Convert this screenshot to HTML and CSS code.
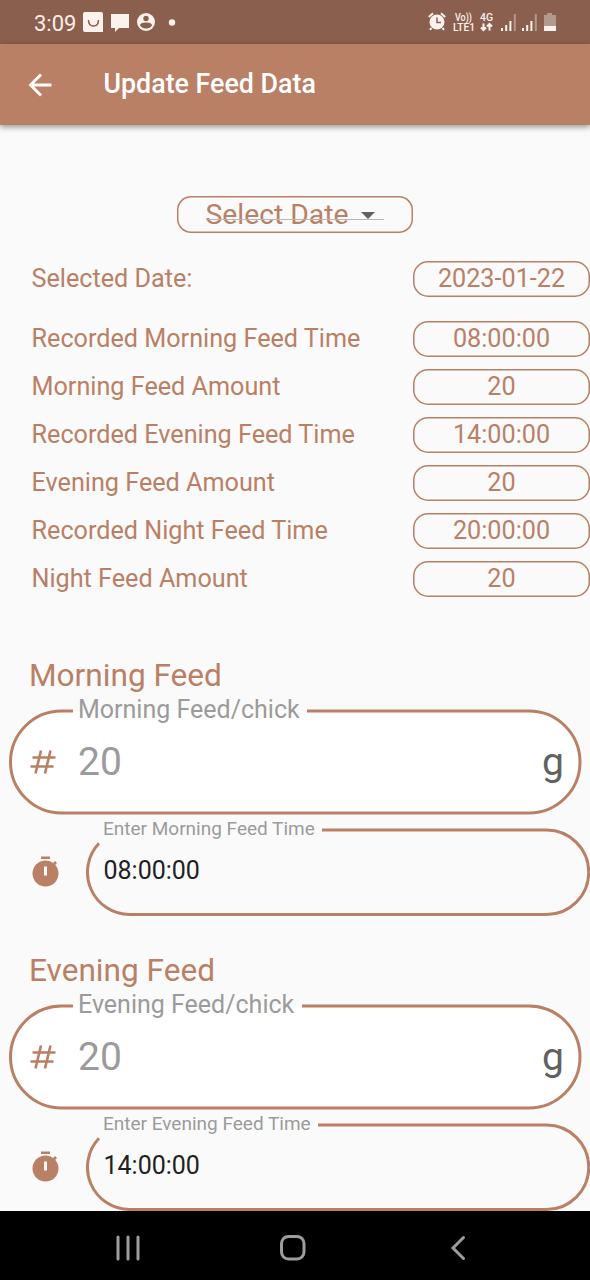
FILE: index.html
```html
<!DOCTYPE html>
<html lang="en">
<head>
<meta charset="utf-8">
<title>Update Feed Data</title>
<link rel="stylesheet" href="styles.css">
</head>
<body>
<div class="screen">
  <div class="status">
    <span class="clock">3:09</span>
    <svg class="status-left" width="98" height="24" viewBox="0 0 98 24">
      <path class="light" d="M2 1H18Q20 1 20 3V21H2Q0 21 0 19V3Q0 1 2 1Z"/>
      <path class="smile" d="M5.500 9Q5.500 15 10.500 15T15.500 9"/>
      <path class="light" d="M28 3H46V17H36L32 21V17H28Z"/>
      <circle class="light" cx="63" cy="11" r="9"/>
      <circle class="cut" cx="63" cy="7.500" r="2.700"/>
      <path class="cut" d="M57 14.500Q57 11.500 63 11.500T69 14.500Q67 17.500 63 17.500T57 14.500Z"/>
      <circle class="light" cx="89" cy="11.500" r="3.200"/>
    </svg>
    <svg class="status-right" width="130" height="24" viewBox="0 0 130 24">
      <circle class="light" cx="9" cy="11" r="7.500"/>
      <path class="bell" d="M0.800 6L5 2.200M13 2.200L17.200 6M3.500 17L2 18.800M14.500 17L16 18.800"/>
      <path class="hand" d="M9 6.500V11.500H13"/>
      <text class="net" x="27" y="9.500" textLength="17" lengthAdjust="spacingAndGlyphs">Vo))</text>
      <text class="net" x="25" y="20" textLength="22" lengthAdjust="spacingAndGlyphs">LTE1</text>
      <text class="net" x="52" y="9.500" textLength="13" lengthAdjust="spacingAndGlyphs">4G</text>
      <path class="arrows" d="M55.500 12.500V19M53 16.500L55.500 19L58 16.500M61.500 19.500V13M59 15.500L61.500 13L64 15.500"/>
      <path class="light" d="M73 17h2v3h-2zM77.200 14h2v6h-2zM81.400 10h2v10h-2zM94 17h2v3h-2zM98.200 14h2v6h-2zM102.400 10h2v10h-2z"/>
      <path class="dim" d="M85.800 3h2v17h-2zM106.800 3h2v17h-2zM119 2h5v2h4v11h-12V4h3z"/>
      <path class="light" d="M116 15H128V20H116Z"/>
    </svg>
  </div>
  <header class="appbar">
    <svg class="back" width="24" height="24" viewBox="0 0 24 24"><path d="M23.500 12H2.500M13 1.500L2.500 12L13 22.500"/></svg>
    <h1 class="title">Update Feed Data</h1>
  </header>
  <main class="content">
    <div class="picker"><span class="picker-text">Select Date</span><span class="caret"></span><span class="underline"></span></div>
    <div class="row first"><span>Selected Date:</span><span class="pill">2023-01-22</span></div>
    <div class="row"><span>Recorded Morning Feed Time</span><span class="pill">08:00:00</span></div>
    <div class="row"><span>Morning Feed Amount</span><span class="pill">20</span></div>
    <div class="row"><span>Recorded Evening Feed Time</span><span class="pill">14:00:00</span></div>
    <div class="row"><span>Evening Feed Amount</span><span class="pill">20</span></div>
    <div class="row"><span>Recorded Night Feed Time</span><span class="pill">20:00:00</span></div>
    <div class="row"><span>Night Feed Amount</span><span class="pill">20</span></div>

    <section class="feed">
      <h2 class="heading">Morning Feed</h2>
      <div class="amount">
        <svg class="outline" width="590" height="106" viewBox="0 0 590 106">
          <path class="fill" d="M61.500 2H529A51 51 0 0 1 529 104H61.500A51 51 0 0 1 61.500 2Z"/>
          <path class="line" d="M307 2H529A51 51 0 0 1 529 104H61.500A51 51 0 0 1 61.500 2H73"/>
        </svg>
        <span class="amount-label">Morning Feed/chick</span>
        <svg class="hash" width="26" height="24" viewBox="0 0 26 24"><path d="M2.500 7.500H25.500M.5 16.500H23.500M11 .5L5.500 23.500M20.500 .5L15 23.500"/></svg>
        <span class="amount-value">20</span><span class="unit">g</span>
      </div>
      <div class="time">
        <svg class="outline" width="590" height="90" viewBox="0 0 590 90">
          <path class="line" d="M322 3H546.500A42.200 42.200 0 0 1 546.500 87.500H129.700A42.200 42.200 0 0 1 99 16.300"/>
        </svg>
        <span class="time-label">Enter Morning Feed Time</span>
        <svg class="watch" width="28" height="32" viewBox="0 0 28 32"><path class="brown" d="M9 .5h9V3H9zM21 7l2-2 2 2-2 2z"/><circle class="brown" cx="13.500" cy="17.500" r="13"/><path class="bg" d="M12 10.500h3v9h-3z"/></svg>
        <span class="time-value">08:00:00</span>
      </div>
    </section>

    <section class="feed second">
      <h2 class="heading">Evening Feed</h2>
      <div class="amount">
        <svg class="outline" width="590" height="106" viewBox="0 0 590 106">
          <path class="fill" d="M61.500 2H529A51 51 0 0 1 529 104H61.500A51 51 0 0 1 61.500 2Z"/>
          <path class="line" d="M302 2H529A51 51 0 0 1 529 104H61.500A51 51 0 0 1 61.500 2H73"/>
        </svg>
        <span class="amount-label">Evening Feed/chick</span>
        <svg class="hash" width="26" height="24" viewBox="0 0 26 24"><path d="M2.500 7.500H25.500M.5 16.500H23.500M11 .5L5.500 23.500M20.500 .5L15 23.500"/></svg>
        <span class="amount-value">20</span><span class="unit">g</span>
      </div>
      <div class="time">
        <svg class="outline" width="590" height="90" viewBox="0 0 590 90">
          <path class="line" d="M318 3H546.500A42.200 42.200 0 0 1 546.500 87.500H129.700A42.200 42.200 0 0 1 99 16.300"/>
        </svg>
        <span class="time-label">Enter Evening Feed Time</span>
        <svg class="watch" width="28" height="32" viewBox="0 0 28 32"><path class="brown" d="M9 .5h9V3H9zM21 7l2-2 2 2-2 2z"/><circle class="brown" cx="13.500" cy="17.500" r="13"/><path class="bg" d="M12 10.500h3v9h-3z"/></svg>
        <span class="time-value">14:00:00</span>
      </div>
    </section>
  </main>
  <nav class="navbar">
    <svg width="24" height="26" viewBox="0 0 24 26"><path d="M2 2V24M12 2V24M22 2V24"/></svg>
    <svg class="home" width="26" height="26" viewBox="0 0 26 26"><rect x="1.500" y="1.500" width="22.500" height="22.500" rx="7"/></svg>
    <svg width="16" height="26" viewBox="0 0 16 26"><path d="M13.500 2.500L3 13L13.500 23.500"/></svg>
  </nav>
</div>
</body>
</html>
```
FILE: styles.css
```css
* { box-sizing: border-box; }
body { margin: 0; font-family: Roboto, sans-serif; background: #fafafa; color: #b98066; }
svg { display: block; flex: none; overflow: visible; }
.screen { width: 590px; height: 1280px; display: flex; flex-direction: column; overflow: hidden; }
.status { height: 44px; flex: none; background: #8b5f4d; display: flex; align-items: center; padding: 0 32px 0 34px; }
.clock { color: #fbeee8; font-size: 22px; line-height: 44px; width: 49px; white-space: nowrap; padding-top: 3px; }
.status-left { margin-top: 2px; }
.status-right { margin: 1px 0 0 auto; }
.light { fill: #fbf1ed; }
.cut { fill: #8b5f4d; }
.dim { fill: #b2998f; }
.smile { fill: none; stroke: #8b5f4d; stroke-width: 1.5; }
.bell, .arrows { fill: none; stroke: #fbf1ed; stroke-width: 2; }
.hand { fill: none; stroke: #8b5f4d; stroke-width: 1.5; }
.net { fill: #fbf1ed; font-size: 11px; font-weight: 500; }
.appbar { height: 81px; flex: none; background: #b98066; display: flex; align-items: center; padding-left: 28px; box-shadow: 0 2px 6px rgba(0,0,0,.42); position: relative; }
.back path { fill: none; stroke: #fff; stroke-width: 2.8; }
.title { margin: 0 0 2px 51.5px; font-size: 26.8px; font-weight: 500; color: #fff; white-space: nowrap; }
.content { flex: 1; min-height: 0; overflow: hidden; padding-top: 71px; }
.picker { position: relative; width: 236px; height: 37px; margin-left: 177px; box-shadow: inset 0 0 0 1.5px #b98066; border-radius: 14px; display: flex; align-items: center; padding-left: 28.5px; }
.picker-text { font-size: 28.3px; line-height: 34px; width: 155px; white-space: nowrap; }
.caret { border: 7px solid transparent; border-top-color: #616161; border-bottom: 0; margin-top: 2px; }
.underline { position: absolute; left: 29px; top: 23px; width: 178px; height: 1px; background: #bdb5b2; }
.row { display: flex; justify-content: space-between; height: 36px; margin-top: 12px; padding-left: 31.5px; font-size: 25.2px; line-height: 36px; white-space: nowrap; }
.row.first { margin: 28px 0 24px; }
.pill { width: 177px; box-shadow: inset 0 0 0 1.5px #b98066; border-radius: 15px; text-align: center; line-height: 36px; }
.feed { padding-top: 58px; height: 319px; }
.feed.second { padding-top: 34px; }
.heading { margin: 0; padding-left: 29px; height: 54px; font-size: 31.6px; line-height: 42px; font-weight: 400; }
.amount { position: relative; height: 106px; display: flex; align-items: center; padding: 0 26px 0 30px; }
.outline { position: absolute; left: 0; top: 0; }
.fill { fill: #fff; }
.line { fill: none; stroke: #b98066; stroke-width: 3; }
.amount-label, .time-label { position: absolute; color: #9b9b9b; white-space: nowrap; }
.amount-label { left: 78px; top: -13px; font-size: 25px; line-height: 28px; }
.hash, .amount-value, .unit, .watch, .time-value { position: relative; }
.hash path { fill: none; stroke: #b98066; stroke-width: 2.6; }
.amount-value { margin-left: 22px; font-size: 39px; line-height: 50px; color: #9b9b9b; }
.unit { margin-left: auto; font-size: 39px; line-height: 50px; color: #616161; }
.time { position: relative; height: 90px; margin-top: 12px; display: flex; padding-left: 32px; }
.time-label { left: 103px; top: -9px; font-size: 19px; line-height: 22px; }
.watch { margin-top: 28.5px; }
.brown { fill: #b98066; }
.bg { fill: #fafafa; }
.time-value { margin: 29px 0 0 43.5px; font-size: 25px; line-height: 30px; color: #212121; }
.navbar { height: 69px; flex: none; background: #000; display: flex; align-items: center; justify-content: space-between; padding: 5px 124px 0 116px; }
.navbar path, .navbar rect { fill: none; stroke: #9d9d9d; stroke-width: 3; stroke-linecap: round; }
.navbar .home { margin-right: 4px; }
```
